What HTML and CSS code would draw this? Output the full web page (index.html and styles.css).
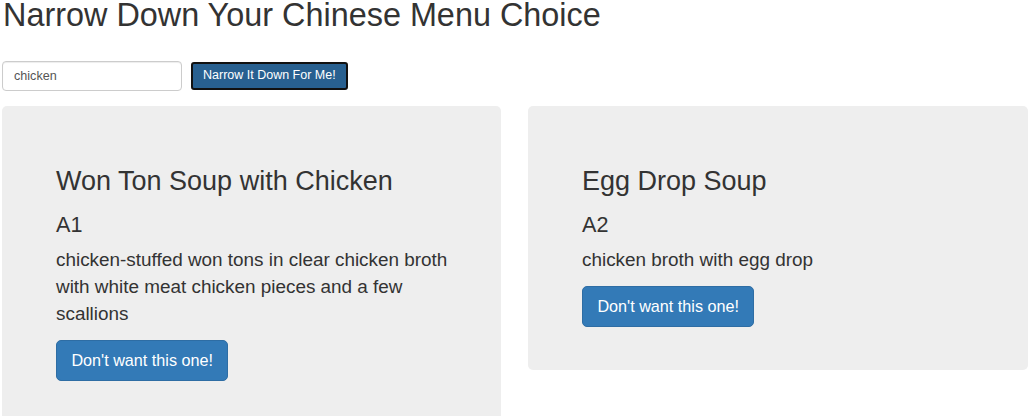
FILE: index.html
```html
<!DOCTYPE html>
<html>
<head>
<meta charset="utf-8">
<title>Narrow Down Your Chinese Menu Choice</title>
<link rel="stylesheet" href="styles.css">
</head>
<body>
<div class="page">
  <h1 class="title">Narrow Down Your Chinese Menu Choice</h1>
  <div class="search">
    <input class="search-input" type="text" value="chicken">
    <button class="search-btn" type="button">Narrow It Down For Me!</button>
  </div>
  <div class="results">
    <div class="card">
      <h2 class="card-name">Won Ton Soup with Chicken</h2>
      <h3 class="card-code">A1</h3>
      <p class="card-desc">chicken-stuffed won tons in clear chicken broth with white meat chicken pieces and a few scallions</p>
      <button class="remove-btn" type="button">Don't want this one!</button>
    </div>
    <div class="card">
      <h2 class="card-name">Egg Drop Soup</h2>
      <h3 class="card-code">A2</h3>
      <p class="card-desc">chicken broth with egg drop</p>
      <button class="remove-btn" type="button">Don't want this one!</button>
    </div>
  </div>
</div>
</body>
</html>
```
FILE: styles.css
```css
html, body {
  margin: 0;
  padding: 0;
  background: #fff;
}
body {
  font-family: "Liberation Sans", Arial, Helvetica, sans-serif;
  font-size: 12.6px;
  line-height: 1.42857;
  color: #333;
  overflow: hidden;
}
.page {
  padding: 0 3px 0 2px;
}
.title {
  margin: 0 0 0 1px;
  font-size: 32.4px;
  font-weight: 500;
  line-height: 30px;
  color: #333;
}
.search {
  display: flex;
  align-items: flex-start;
  gap: 9px;
  margin-top: 30.6px;
}
.search-input {
  box-sizing: border-box;
  width: 180px;
  height: 30px;
  margin: 0;
  padding: 4px 11px;
  border: 1px solid #ccc;
  border-radius: 4px;
  font-family: "Liberation Sans", Arial, sans-serif;
  font-size: 12.6px;
  color: #555;
  background: #fff;
  box-shadow: inset 0 1px 1px rgba(0,0,0,.075);
}
.search-btn {
  box-sizing: border-box;
  height: 28px;
  margin-top: 1px;
  padding: 0 10px;
  border: 2px solid #111;
  border-radius: 3px;
  background: #286090;
  color: #fff;
  font-family: "Liberation Sans", Arial, sans-serif;
  font-size: 12.5px;
  line-height: 1;
}
.results {
  display: grid;
  grid-template-columns: 499px 500px;
  gap: 27px;
  margin-top: 15px;
  align-items: start;
}
.card {
  background: #eee;
  border-radius: 5px;
  padding: 40px 40px 43px 54px;
}
.card-name {
  margin: 21.5px 0 0;
  font-size: 27px;
  font-weight: 500;
  line-height: 29.7px;
  color: #333;
}
.card-code {
  margin: 16px 0 0;
  font-size: 21.6px;
  font-weight: 500;
  line-height: 23.76px;
  color: #333;
}
.card-desc {
  margin: 9px 0 13.5px;
  font-size: 18.9px;
  line-height: 27px;
}
.remove-btn {
  box-sizing: border-box;
  display: inline-block;
  height: 41px;
  padding: 0 14.4px;
  border: 1px solid #2e6da4;
  border-radius: 5px;
  background: #337ab7;
  color: #fff;
  font-family: "Liberation Sans", Arial, sans-serif;
  font-size: 16.2px;
  line-height: 1;
}
```
